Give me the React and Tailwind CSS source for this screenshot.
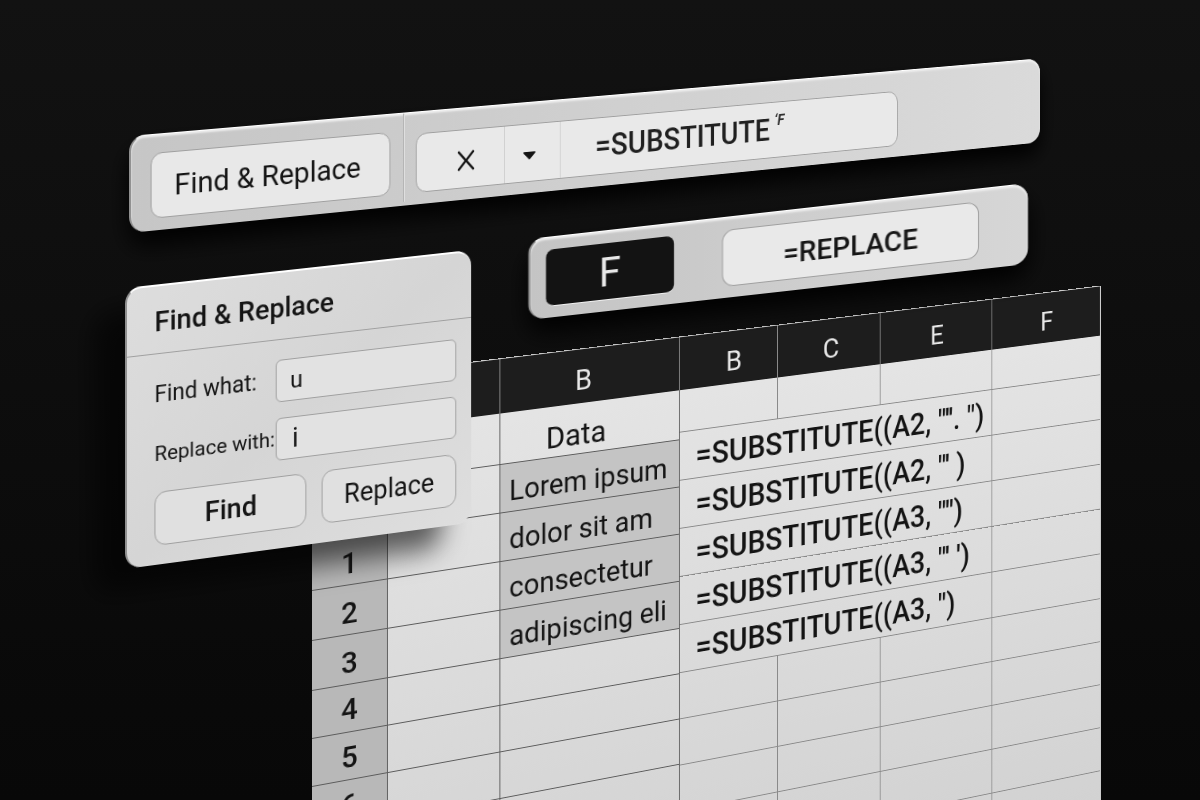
import React, { useState } from 'react';
import { FaCaretDown } from 'react-icons/fa';

const dataRows = ['Lorem ipsum', 'dolor sit am', 'consectetur', 'adipiscing eli'];

const formulas = [
  `=SUBSTITUTE((A2, "''. ")`,
  `=SUBSTITUTE((A2, "' )`,
  `=SUBSTITUTE((A3, "")`,
  `=SUBSTITUTE((A3, "' ')`,
  `=SUBSTITUTE((A3, ")`
];

const emptyRows = ['4', '5', '6', '', '', ''];

const Toolbar = () => {
  const [formula, setFormula] = useState('=SUBSTITUTE');

  return (
    <div className="absolute left-[129px] top-[136px] w-[89%] h-[97px] pb-3 pl-5 flex items-end rounded-2xl origin-top-left [transform:perspective(1200px)_rotateY(10deg)_skewY(-4.8deg)] bg-linear-to-r from-[#c6c6c6] to-[#dadada] border-t border-l-2 border-t-white border-l-[#8f8f8f] shadow-[inset_0_2px_2px_#eeeeee,0_14px_24px_#000000]">
      <button className="w-[254px] h-[66px] pr-2 rounded-xl border border-[#a0a0a0] bg-[#e8e8e8] text-[30px] text-[#141414]">
        Find &amp; Replace
      </button>
      <div className="self-stretch -mb-2 ml-3.5 mr-3 w-0.5 bg-[#b4b4b4] border-r border-[#e0e0e0]" />
      <div className="flex w-[576px] h-[62px] rounded-xl border border-[#a0a0a0] bg-[#e9e9e9] overflow-hidden">
        <button aria-label="Cancel" className="w-[99px] pl-3 pt-1 flex items-center justify-center border-r border-[#d0d0d0] text-[#141414]">
          <svg className="w-5 h-6" viewBox="0 0 20 24" fill="none" stroke="currentColor" strokeWidth="2.6" strokeLinecap="round">
            <path d="M2 3 L18 21 M18 3 L2 21" />
          </svg>
        </button>
        <button aria-label="More functions" className="w-[64px] pr-2 pt-1 flex items-center justify-center border-r border-[#d0d0d0] text-[#141414]">
          <FaCaretDown className="w-6 h-6" />
        </button>
        <input
          aria-label="Formula"
          value={formula}
          onChange={(e) => setFormula(e.target.value)}
          className="w-[256px] pl-10 bg-transparent text-[33px] font-medium text-[#202020] outline-none"
        />
        <span className="pt-2 text-base font-bold italic text-[#303030]">‘F</span>
      </div>
    </div>
  );
};

const ReplaceBar = () => {
  const [formula, setFormula] = useState('=REPLACE');

  return (
    <div className="absolute left-[528px] top-[239px] w-[500px] h-[81px] px-4 flex items-center rounded-2xl origin-top-left -skew-y-[6.4deg] bg-linear-to-r from-[#c4c4c4] to-[#d6d6d6] border-t border-l-2 border-t-white border-l-[#8f8f8f] shadow-[inset_0_2px_2px_#eeeeee,0_14px_24px_#000000]">
      <button className="w-32 h-[57px] pt-1 rounded-lg bg-[#131313] border-b border-[#f0f0f0] text-[40px] leading-10 text-[#e8e8e8]">F</button>
      <input
        aria-label="Replace formula"
        value={formula}
        onChange={(e) => setFormula(e.target.value)}
        className="w-[257px] h-[57px] ml-12 pt-1 rounded-xl border border-[#a0a0a0] bg-[#e9e9e9] text-center text-[28px] font-medium text-[#141414] outline-none"
      />
    </div>
  );
};

const FindReplaceDialog = () => {
  const [find, setFind] = useState('u');
  const [replace, setReplace] = useState('i');

  return (
    <section className="absolute left-[125px] top-[288px] w-[362px] h-[281px] rounded-2xl origin-top-left [transform:perspective(2100px)_rotateY(10deg)_skewY(-6.2deg)] bg-linear-to-br from-[#dddddd] via-[#d5d5d5] to-[#dedede] border-t-2 border-l-2 border-t-white border-l-[#8f8f8f] text-[#141414] shadow-[-32px_22px_28px_rgba(0,0,0,0.6)]">
      <h2 className="h-[68px] pl-7 pt-1 flex items-center border-b border-[#a0a0a0] text-[28px] font-medium">
        Find &amp; Replace
      </h2>
      <div className="pl-7 pr-4 pt-5">
        <div className="flex items-center mb-4">
          <label htmlFor="find" className="w-[125px] text-[23px] whitespace-nowrap">Find what:</label>
          <input
            id="find"
            value={find}
            onChange={(e) => setFind(e.target.value)}
            className="flex-1 min-w-0 h-[43px] pl-3.5 rounded-md border border-[#a0a0a0] bg-[#e2e2e2] text-[24px] outline-none"
          />
        </div>
        <div className="flex items-center mb-4">
          <label htmlFor="replace" className="w-[125px] text-[21px] whitespace-nowrap">Replace with:</label>
          <input
            id="replace"
            value={replace}
            onChange={(e) => setReplace(e.target.value)}
            className="flex-1 min-w-0 h-[43px] pl-4 rounded-md border border-[#a0a0a0] bg-[#e2e2e2] text-[28px] outline-none"
          />
        </div>
        <div className="flex gap-4">
          <button className="w-[157px] h-[54px] rounded-xl border border-[#a0a0a0] bg-[#e0e0e0] text-[28px] font-medium">Find</button>
          <button className="flex-1 h-[54px] rounded-xl border border-[#a0a0a0] bg-[#e0e0e0] text-[27px]">Replace</button>
        </div>
      </div>
    </section>
  );
};

const Sheet = () => (
  <div className="absolute left-[312px] top-[381px] w-[76%] flex items-start origin-top-left [transform:perspective(1140px)_rotateY(10deg)_skewY(-6.8deg)] border-t border-r border-[#cccccc] bg-linear-to-b from-[#e6e6e6] to-[#d0d0d0] text-[#141414]">
    {/* Row numbers and source data */}
    <table className="w-[396px] table-fixed border-collapse">
      <thead>
        <tr className="h-14 bg-[#1d1d1d] text-[30px] leading-8 text-[#e8e8e8]">
          <th className="w-[77px]" />
          <th className="w-[119px] border-r border-[#8a8a8a]" />
          <th className="border-r border-[#8a8a8a] pt-2 pr-4 font-normal">B</th>
        </tr>
      </thead>
      <tbody className="text-[30px]">
        <tr className="h-[52px] border-b border-[#5c5c5c]">
          <th className="border-r border-[#5c5c5c] bg-[#b8b8b8]" />
          <td className="border-r border-[#5c5c5c]" />
          <td className="border-r border-[#5c5c5c] pt-3 pr-8 text-center text-[32px] leading-8">Data</td>
        </tr>
        {dataRows.map((text, index) => (
          <tr key={text} className="h-[50px] border-b border-[#5c5c5c]">
            <th className="border-r border-[#5c5c5c] bg-[#b8b8b8] pt-2 font-medium leading-8">{index > 0 ? index : ''}</th>
            <td className="border-r border-[#5c5c5c]" />
            <td className="border-r border-[#5c5c5c] bg-[#c4c4c4] pt-2 pl-2.5 leading-8 whitespace-nowrap">{text}</td>
          </tr>
        ))}
        {emptyRows.map((label, index) => (
          <tr key={index} className="h-12 border-b border-[#5c5c5c]">
            <th className="border-r border-[#5c5c5c] bg-[#b8b8b8] pt-1 font-medium leading-8">{label}</th>
            <td className="border-r border-[#5c5c5c]" />
            <td className="border-r border-[#5c5c5c]" />
          </tr>
        ))}
      </tbody>
    </table>

    {/* Formula columns */}
    <table className="flex-1 table-fixed border-collapse">
      <thead>
        <tr className="h-14 bg-[#1d1d1d] text-[30px] leading-8 text-[#e8e8e8]">
          <th className="w-[22%] border-r border-[#8a8a8a] pt-2 pl-3 font-normal">B</th>
          <th className="w-[24%] border-r border-[#8a8a8a] pt-2 pl-1 font-normal">C</th>
          <th className="w-[27%] border-r border-[#8a8a8a] pt-2 font-normal">E</th>
          <th className="pt-2 font-normal">F</th>
        </tr>
      </thead>
      <tbody className="text-[33px] font-medium">
        <tr className="h-[44px] border-b border-[#8a8a8a]">
          <td className="border-r border-[#8a8a8a]" />
          <td className="border-r border-[#8a8a8a]" />
          <td className="border-r border-[#8a8a8a]" />
          <td />
        </tr>
        {formulas.map((formula) => (
          <tr key={formula} className="h-[51px] border-b border-[#8a8a8a]">
            <td colSpan={3} className="border-r border-[#8a8a8a] pt-1 pl-[18px] leading-8 whitespace-pre">{formula}</td>
            <td />
          </tr>
        ))}
        {emptyRows.map((_, index) => (
          <tr key={index} className="h-[49px] border-b border-[#8a8a8a]">
            <td className="border-r border-[#8a8a8a]" />
            <td className="border-r border-[#8a8a8a]" />
            <td className="border-r border-[#8a8a8a]" />
            <td />
          </tr>
        ))}
      </tbody>
    </table>
  </div>
);

const App = () => {
  return (
    <main className="relative h-screen overflow-hidden bg-linear-to-b from-[#121212] to-[#080808] font-[Roboto,sans-serif]">
      <Sheet />
      <ReplaceBar />
      <Toolbar />
      <FindReplaceDialog />
    </main>
  );
};

export default App;
